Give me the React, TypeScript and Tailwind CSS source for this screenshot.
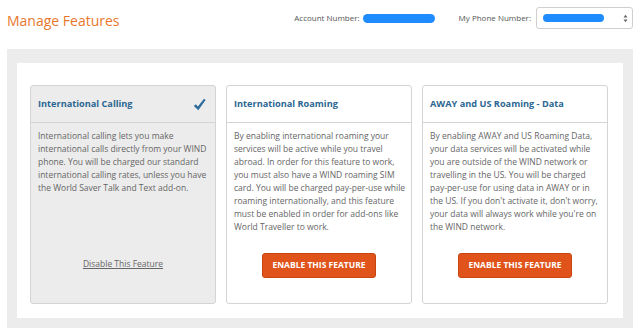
import React from "react";

const font = { fontFamily: '"Open Sans", "Liberation Sans", sans-serif' };

const features = [
  {
    title: "International Calling",
    active: true,
    text: "International calling lets you make international calls directly from your WIND phone. You will be charged our standard international calling rates, unless you have the World Saver Talk and Text add-on.",
  },
  {
    title: "International Roaming",
    active: false,
    text: "By enabling international roaming your services will be active while you travel abroad. In order for this feature to work, you must also have a WIND roaming SIM card. You will be charged pay-per-use while roaming internationally, and this feature must be enabled in order for add-ons like World Traveller to work.",
  },
  {
    title: "AWAY and US Roaming - Data",
    active: false,
    text: "By enabling AWAY and US Roaming Data, your data services will be activated while you are outside of the WIND network or travelling in the US. You will be charged pay-per-use for using data in AWAY or in the US. If you don't activate it, don't worry, your data will always work while you're on the WIND network.",
  },
];

const Card = ({ title, active, text }: { title: string; active: boolean; text: string }) => (
  <div
    className={`flex h-[219px] flex-col rounded-[3px] border border-[#d4d4d4] ${
      active ? "bg-[#ececec]" : "bg-white"
    }`}
  >
    {/* header */}
    <div className="flex h-[37px] items-center justify-between border-b border-[#d4d4d4] px-[7px]">
      <span className="text-[9.2px] font-bold text-[#2b6692]">{title}</span>
      {active && (
        <svg width="13" height="13" viewBox="0 0 13 13" className="mr-[2px]">
          <path d="M0.8 8 L2.8 6.2 L4.9 8.6 L11 0.8 L12.6 2 L5.3 12.2 Z" fill="#2f6c9b" />
        </svg>
      )}
    </div>

    <p className="pl-[7px] pr-[4px] pt-[6px] text-[8.5px] leading-[13px] text-[#666]">{text}</p>

    {active ? (
      <div className="mt-auto mb-[30px] text-center">
        <a href="#" className="text-[8.5px] leading-[13px] text-[#666] underline">
          Disable This Feature
        </a>
      </div>
    ) : (
      <div className="mt-auto mb-[25px] flex justify-center">
        <button className="h-[25px] w-[114px] rounded-[3px] border border-[#c9450f] bg-[#e0541b] text-[8.5px] font-bold uppercase text-white">
          Enable This Feature
        </button>
      </div>
    )}
  </div>
);

export default function App() {
  return (
    <div className="h-[332px] w-[640px] overflow-hidden bg-white" style={font}>
      {/* top bar */}
      <div className="flex h-[49px] items-start px-[7px]">
        <h1 className="pt-[10px] text-[14px] text-[#e8782c]">Manage Features</h1>
        <div className="ml-auto flex items-center pt-[7px]">
          <span className="text-[8px] text-[#555]">Account Number:</span>
          <span className="ml-[3px] h-[9px] w-[72px] rounded-full bg-[#1e8bff]" />
          <span className="ml-[24px] text-[8px] text-[#555]">My Phone Number:</span>
          <div className="ml-[5px] flex h-[22px] w-[97px] items-center rounded-[3px] border border-[#cfcfcf] bg-white pl-[6px] pr-[4px]">
            <span className="h-[8px] w-[61px] rounded-full bg-[#1e8bff]" />
            <svg width="5" height="9" viewBox="0 0 5 9" className="ml-auto">
              <path d="M0.5 3.5 L2.5 0.8 L4.5 3.5 Z M0.5 5.5 L2.5 8.2 L4.5 5.5 Z" fill="#666" />
            </svg>
          </div>
        </div>
      </div>

      {/* features panel */}
      <div className="mx-[7px] bg-[#ececec] px-[10px] pt-[14px] pb-[10px]">
        <div className="bg-white pt-[22px] pb-[14px] pl-[13px] pr-[15px]">
          <div className="grid grid-cols-[186px_186px_186px] gap-[10px]">
            {features.map((f) => (
              <Card key={f.title} {...f} />
            ))}
          </div>
        </div>
      </div>
    </div>
  );
}
